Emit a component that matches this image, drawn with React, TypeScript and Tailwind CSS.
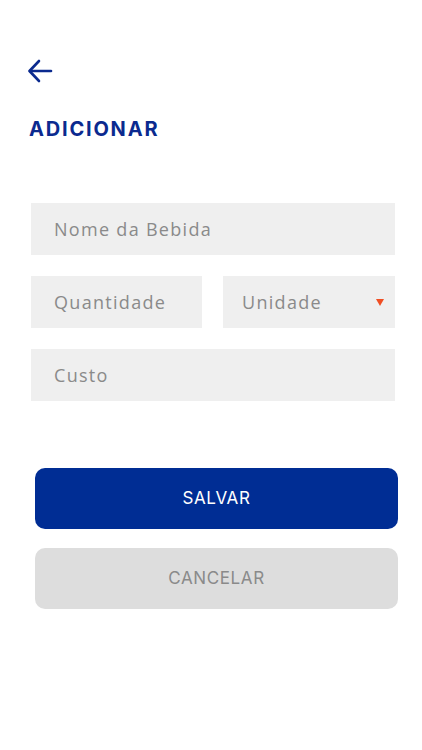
import React from 'react'

function Field({ label, className = '', pad = 'pl-[23px]', children }: { label: string; className?: string; pad?: string; children?: React.ReactNode }) {
  return (
    <div className={`flex h-[52px] items-center bg-[#efefef] pr-[11px] ${pad} ${className}`}>
      <span className="flex-1 font-['Open_Sans',sans-serif] text-[18px] tracking-[1.3px] text-[#8a8a8a]">{label}</span>
      {children}
    </div>
  )
}

export default function App() {
  return (
    <div className="h-[750px] w-[422px] bg-white">
      <div className="px-[27px] pt-[58px]">
        <button className="block">
          <svg width="26" height="26" viewBox="0 0 26 26" fill="none" stroke="#0b2a8f" strokeWidth="2.6" strokeLinecap="round" strokeLinejoin="round">
            <path d="M24 13H3" />
            <path d="M12 3L2.5 13L12 23" />
          </svg>
        </button>
        <h1 className="mt-[30px] pl-[2px] font-['Inter',sans-serif] text-[20px] font-bold tracking-[1.8px] text-[#0b2a8f]">
          ADICIONAR
        </h1>
      </div>

      <div className="mt-[59px] flex w-[364px] flex-col gap-[21px] pl-[31px]">
        <Field label="Nome da Bebida" className="w-[364px]" />
        <div className="flex w-[364px] gap-[21px]">
          <Field label="Quantidade" className="w-[171px]" />
          <Field label="Unidade" pad="pl-[19px]" className="w-[172px]">
            <svg width="8" height="7" viewBox="0 0 8 7">
              <path d="M0 0H8L4 7Z" fill="#f04e23" />
            </svg>
          </Field>
        </div>
        <Field label="Custo" className="w-[364px]" />
      </div>

      <div className="mt-[67px] flex flex-col gap-[19px] pl-[35px]">
        <button className="h-[61px] w-[363px] rounded-[10px] bg-[#002d94] pt-[1px] font-['Inter',sans-serif] text-[17px] tracking-[0.6px] text-white">
          SALVAR
        </button>
        <button className="h-[61px] w-[363px] rounded-[10px] bg-[#dddddd] pt-[1px] font-['Inter',sans-serif] text-[17px] tracking-[0.6px] text-[#8a8a8a]">
          CANCELAR
        </button>
      </div>
    </div>
  )
}
